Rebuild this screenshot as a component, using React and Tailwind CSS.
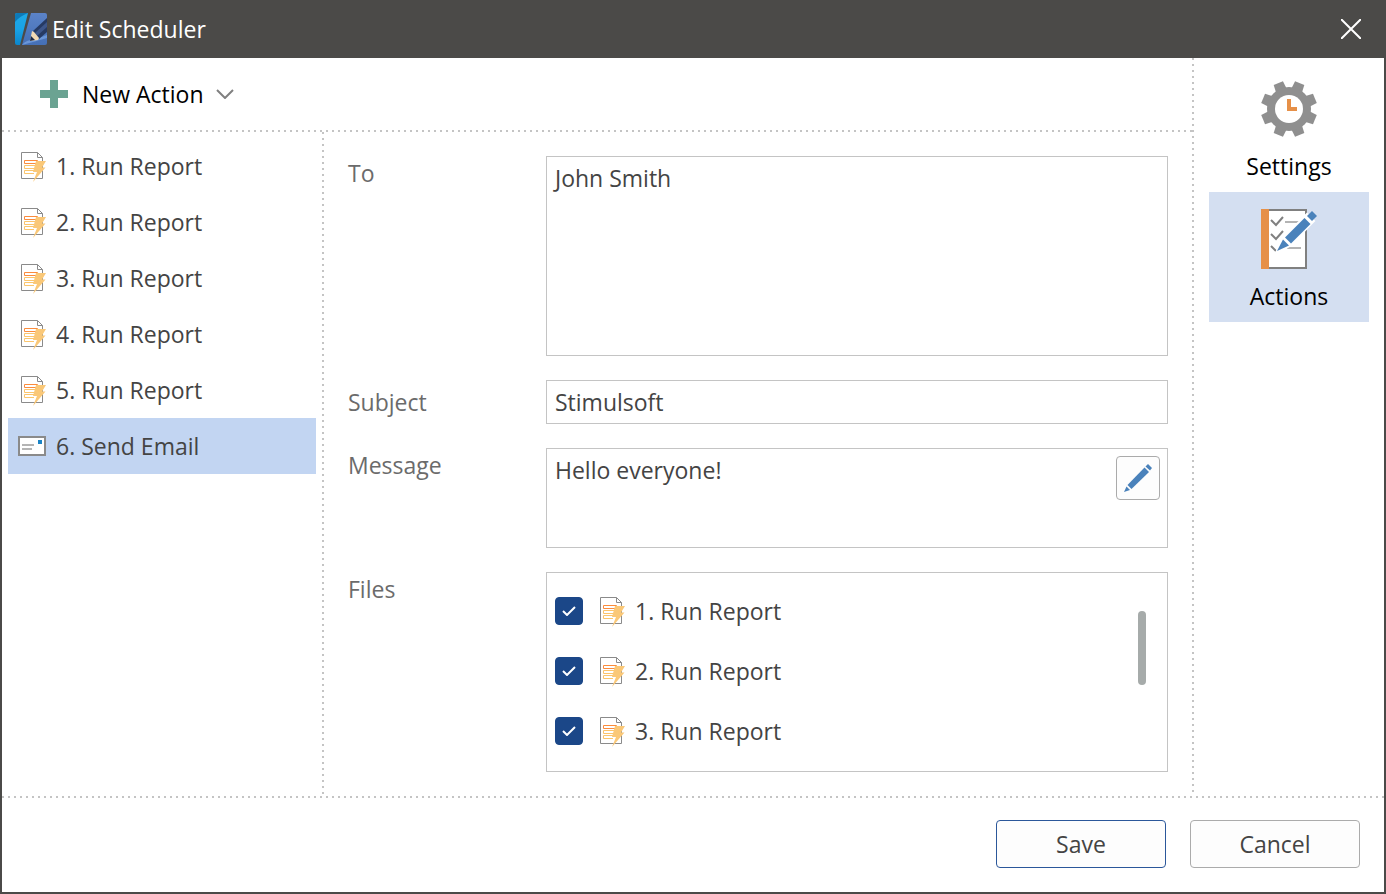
import { useState } from "react";

const actions = [
  { id: 1, label: "1. Run Report", type: "report" },
  { id: 2, label: "2. Run Report", type: "report" },
  { id: 3, label: "3. Run Report", type: "report" },
  { id: 4, label: "4. Run Report", type: "report" },
  { id: 5, label: "5. Run Report", type: "report" },
  { id: 6, label: "6. Send Email", type: "email" },
];

const files = ["1. Run Report", "2. Run Report", "3. Run Report"];

function AppLogo() {
  return (
    <svg width="32" height="32" viewBox="0 0 32 32" aria-hidden="true">
      <defs>
        <linearGradient id="logoLeft" x1="0" y1="0" x2="0" y2="1">
          <stop offset="0" stopColor="#1fa8e6" />
          <stop offset="0.5" stopColor="#19a3e6" />
          <stop offset="1" stopColor="#0b86cc" />
        </linearGradient>
        <linearGradient id="logoRight" x1="0" y1="0" x2="0" y2="1">
          <stop offset="0" stopColor="#5b83c8" />
          <stop offset="1" stopColor="#4570b6" />
        </linearGradient>
        <clipPath id="logoClip">
          <rect width="32" height="32" rx="2" />
        </clipPath>
      </defs>
      <g clipPath="url(#logoClip)">
        <path d="M0 0H13L5 32H0Z" fill="url(#logoLeft)" />
        <path d="M0 9C3 5 8 2 13 0H0Z" fill="#0d7ab8" />
        <path d="M16 0H32V32H7Z" fill="url(#logoRight)" />
        <path d="M7 32C10 28 14 27 18 27L32 22V25L18 29Z" fill="#6a96d8" />
        <path d="M32 5L18 18L24 26L32 19Z" fill="#263a63" />
        <path d="M32 9L20 20L22 23L32 14Z" fill="#3d568a" />
        <path d="M17 18L19 19L24 25L23 27L15 28Z" fill="#f2d9b4" />
        <path d="M16 23L20 27L15 28Z" fill="#1d2a47" />
      </g>
    </svg>
  );
}

function ReportIcon() {
  return (
    <svg
      width="28"
      height="28"
      viewBox="0 0 28 28"
      fill="none"
      className="overflow-visible"
      aria-hidden="true"
    >
      <path d="M3.5 .5H19.5L24.5 5.5V26.5H3.5Z" fill="#fff" stroke="#8a8a8a" />
      <path d="M19.5 .5V5.5H24.5" stroke="#8a8a8a" />
      <path d="M6.5 8.5H19.5V11.5H6.5Z" stroke="#fb8b3c" />
      <path d="M19 13.5H6.5V16.5H17M17 18.5H6.5V21.5H16" stroke="#fbc56d" />
      <path d="M18 9H28L24 15.5H27.5L15 30L19 20H15Z" fill="#fac878" />
    </svg>
  );
}

function EmailIcon() {
  return (
    <svg width="28" height="20" viewBox="0 0 28 20" aria-hidden="true">
      <path d="M1 1H27V19H1Z" fill="#fff" stroke="#8a8a8a" strokeWidth="2" />
      <path d="M20 4H24V8H20Z" fill="#1a84c6" />
      <path d="M4 9H16M4 13H14" stroke="#b4b4b4" strokeWidth="2" />
    </svg>
  );
}

function GearIcon() {
  const teeth = [22.5, 67.5, 112.5, 157.5, 202.5, 247.5, 292.5, 337.5];
  return (
    <svg width="60" height="60" viewBox="-30 -30 60 60" aria-hidden="true">
      <g fill="#8f8f8f">
        {teeth.map((angle) => (
          <path key={angle} d="M-6 -16L-5 -28H5L6 -16Z" transform={`rotate(${angle})`} />
        ))}
        <circle r="22" />
      </g>
      <circle r="14" fill="#fff" />
      <path d="M-2 -10H2V-2H8V2H-2Z" fill="#e69048" />
    </svg>
  );
}

function ChecklistIcon() {
  return (
    <svg width="60" height="60" viewBox="0 0 60 60" fill="none" aria-hidden="true">
      <path d="M3 1H47V59H3Z" fill="#fff" stroke="#808080" strokeWidth="2" />
      <path d="M2 0H10V60H2Z" fill="#e69048" />
      <path d="M26 13H40M32 26H42M28 39H42" stroke="#b4b4b4" strokeWidth="2" />
      <path d="M12 11L17 16L24 8M12 25L17 30L24 22M12 37L17 42" stroke="#808080" strokeWidth="2" />
      <path d="M44 9L48 5L55 12L51 16L32 36L27 39L18 42L22 31L25 28Z" fill="#fff" stroke="#fff" strokeWidth="2" />
      <path d="M53 2L58 7L53 12L48 7Z" fill="#4a82bb" />
      <path d="M45.5 9L51.5 15L32 34.5L26 28.5Z" fill="#4a82bb" />
      <path d="M24 30.5L30 36.5L18 42Z" fill="#4a82bb" />
    </svg>
  );
}

function PencilIcon() {
  return (
    <svg width="28" height="28" viewBox="0 0 28 28" fill="#4a82bb" aria-hidden="true">
      <path d="M24 0L28 4L26 6.5L21.5 2.5Z" />
      <path d="M20.5 3.5L25 8L7.5 25L3.5 21Z" />
      <path d="M2.5 22.5L6 26L0 28Z" />
    </svg>
  );
}

function HorizontalRule() {
  return (
    <div className="h-0.5 shrink-0 bg-[repeating-linear-gradient(to_right,#c4c4c4_0_2px,transparent_2px_6px)]" />
  );
}

function VerticalRule() {
  return (
    <div className="w-0.5 shrink-0 bg-[repeating-linear-gradient(to_bottom,#c4c4c4_0_2px,transparent_2px_6px)]" />
  );
}

export default function App() {
  const [selected, setSelected] = useState(6);

  return (
    <div className="flex min-h-screen flex-col border-2 border-t-0 border-[#4b4a48] bg-white font-['Open_Sans',sans-serif] text-[23px] leading-[34px] text-[#444444]">
      <header className="flex h-[58px] items-center justify-between bg-[#4b4a48] pr-[23px] pl-[13px] text-white">
        <div className="flex items-center gap-[5px]">
          <AppLogo />
          <h1>Edit Scheduler</h1>
        </div>
        <button type="button" aria-label="Close">
          <svg width="20" height="20" viewBox="0 0 20 20" aria-hidden="true">
            <path d="M0 0L20 20M20 0L0 20" stroke="#fff" strokeWidth="2" />
          </svg>
        </button>
      </header>

      <div className="flex flex-1">
        <div className="flex flex-1 flex-col">
          <div className="flex h-[72px] items-center pl-[38px] text-black">
            <button type="button" className="flex items-center">
              <svg width="28" height="28" viewBox="0 0 28 28" aria-hidden="true">
                <path d="M10 0H18V10H28V18H18V28H10V18H0V10H10Z" fill="#6ba392" />
              </svg>
              <span className="mr-3 ml-3.5">New Action</span>
              <svg width="18" height="10" viewBox="0 0 18 10" fill="none" aria-hidden="true">
                <path d="M1 1L9 9L17 1" stroke="#808080" strokeWidth="2" />
              </svg>
            </button>
          </div>
          <HorizontalRule />

          <div className="flex flex-1">
            <ul className="w-80 p-1.5">
              {actions.map((action) => (
                <li key={action.id}>
                  <button
                    type="button"
                    onClick={() => setSelected(action.id)}
                    className={`flex h-14 w-full items-center gap-2.5 pl-2.5 ${
                      selected === action.id ? "bg-[#c2d5f2]" : ""
                    }`}
                  >
                    {action.type === "email" ? <EmailIcon /> : <ReportIcon />}
                    {action.label}
                  </button>
                </li>
              ))}
            </ul>
            <VerticalRule />

            <form className="grid flex-1 grid-cols-[198px_1fr] content-start gap-y-6 p-6">
              <label htmlFor="to" className="text-[#6b6b6b]">
                To
              </label>
              <textarea
                id="to"
                defaultValue="John Smith"
                className="h-[200px] resize-none border border-[#c4c4c4] px-2 py-1"
              />

              <label htmlFor="subject" className="self-center text-[#6b6b6b]">
                Subject
              </label>
              <input
                id="subject"
                type="text"
                defaultValue="Stimulsoft"
                className="h-11 border border-[#c4c4c4] px-2"
              />

              <label htmlFor="message" className="text-[#6b6b6b]">
                Message
              </label>
              <div className="relative flex">
                <textarea
                  id="message"
                  defaultValue="Hello everyone!"
                  className="h-[100px] flex-1 resize-none border border-[#c4c4c4] py-1 pr-16 pl-2"
                />
                <button
                  type="button"
                  aria-label="Edit message"
                  className="absolute top-2 right-2 grid size-11 place-items-center rounded border border-[#ababab] bg-[#fdfdfd]"
                >
                  <PencilIcon />
                </button>
              </div>

              <span id="files" className="text-[#6b6b6b]">
                Files
              </span>
              <div
                role="group"
                aria-labelledby="files"
                className="relative h-[200px] border border-[#c4c4c4] px-2 pt-2"
              >
                {files.map((file) => (
                  <label key={file} className="flex h-[60px] items-center">
                    <span className="relative mr-3.5 grid size-7 place-items-center">
                      <input
                        type="checkbox"
                        defaultChecked
                        className="peer size-7 appearance-none rounded border border-[#1b4788] checked:bg-[#1b4788]"
                      />
                      <svg
                        width="14"
                        height="10"
                        viewBox="0 0 14 10"
                        fill="none"
                        className="pointer-events-none absolute hidden peer-checked:block"
                        aria-hidden="true"
                      >
                        <path d="M1 5L5 9L13 1" stroke="#fff" strokeWidth="2" />
                      </svg>
                    </span>
                    <ReportIcon />
                    <span className="ml-2.5">{file}</span>
                  </label>
                ))}
                <div className="absolute top-[38px] right-[21px] h-[74px] w-2 rounded-full bg-[#a6abaa]" />
              </div>
            </form>
          </div>
        </div>
        <VerticalRule />

        <nav className="w-[190px] px-[15px] pt-1 text-black">
          <button
            type="button"
            className="flex h-[130px] w-full flex-col items-center gap-2.5 pt-[17px]"
          >
            <GearIcon />
            Settings
          </button>
          <button
            type="button"
            className="flex h-[130px] w-full flex-col items-center gap-2.5 bg-[#d4dff1] pt-[17px]"
          >
            <ChecklistIcon />
            Actions
          </button>
        </nav>
      </div>
      <HorizontalRule />

      <footer className="flex justify-end gap-6 px-6 pt-[22px] pb-6">
        <button type="button" className="h-12 w-[170px] rounded border border-[#2b579a] bg-[#fdfdfd]">
          Save
        </button>
        <button type="button" className="h-12 w-[170px] rounded border border-[#ababab] bg-[#fdfdfd]">
          Cancel
        </button>
      </footer>
    </div>
  );
}
